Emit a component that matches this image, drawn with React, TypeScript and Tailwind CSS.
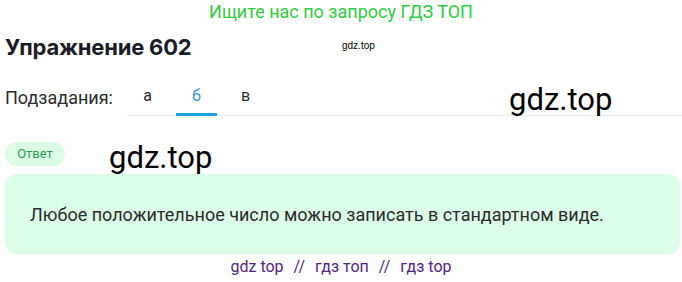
import React from 'react';

const tabs = ['а', 'б', 'в'];

export default function App() {
  const active = 'б';

  return (
    <div className="relative w-[682px] h-[282px] bg-white overflow-hidden font-['Roboto',sans-serif]">
      {/* Top promo line */}
      <div className="h-[24px] flex items-center justify-center text-[18px] leading-none text-[#2fcc3f]">
        Ищите нас по запросу ГДЗ ТОП
      </div>

      {/* Title */}
      <h1 className="mt-[9px] px-[5px] h-[28px] flex items-center text-[22px] font-bold text-[#1b1c25] font-['Inter',sans-serif] tracking-[-0.2px]">
        Упражнение 602
      </h1>

      {/* Subtasks */}
      <div className="mt-[17px] flex items-end pl-[5px]">
        <div className="w-[122px] h-[38px] flex items-center text-[18px] text-[#2b2b2b]">Подзадания:</div>
        <div className="flex-1 flex gap-[8px] border-b border-[#e8eaed]">
          {tabs.map((t) => (
            <div
              key={t}
              className={`w-[41px] h-[38px] flex items-center justify-center text-[16px] border-b-[3px] -mb-px ${
                t === active ? 'text-[#3a98d4] border-[#1ea0e2]' : 'text-[#2b2b2b] border-transparent'
              }`}
            >
              {t}
            </div>
          ))}
        </div>
      </div>

      {/* Answer badge */}
      <div className="mt-[26px] ml-[5px] w-[60px] h-[24px] rounded-full bg-[#dcfce6] flex items-center justify-center text-[13px] text-[#2a9d55]">
        Ответ
      </div>

      {/* Answer box */}
      <div className="mt-[8px] ml-[5px] mr-[2px] h-[80px] rounded-[12px] bg-[#dcfde7] flex items-center px-[25px] text-[18px] text-[#2b2b2b]">
        Любое положительное число можно записать в стандартном виде.
      </div>

      {/* Footer links */}
      <div className="h-[26px] flex items-center justify-center gap-[10px] text-[16px] text-[#53257f]">
        <span>gdz top</span>
        <span>//</span>
        <span>гдз топ</span>
        <span>//</span>
        <span>гдз top</span>
      </div>

      {/* Watermarks */}
      <span className="absolute left-[342px] top-[38px] text-[10px] text-black font-['Liberation_Sans',sans-serif]">gdz.top</span>
      <span className="absolute left-[509px] top-[84px] text-[31px] leading-none text-black">gdz.top</span>
      <span className="absolute left-[109px] top-[142px] text-[31px] leading-none text-black">gdz.top</span>
    </div>
  );
}
